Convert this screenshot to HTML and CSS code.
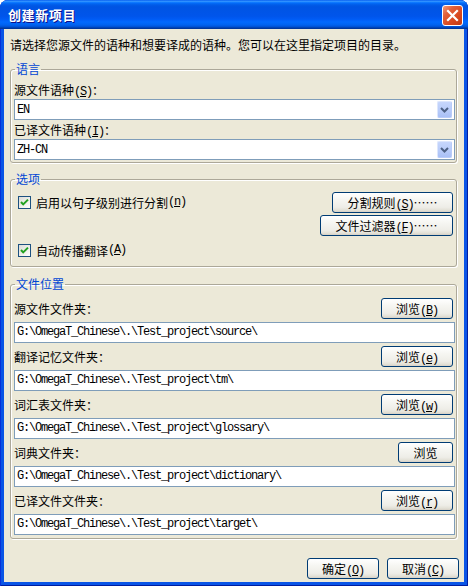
FILE: index.html
```html
<!DOCTYPE html>
<html lang="zh-CN">
<head>
<meta charset="utf-8">
<title>创建新项目</title>
<link rel="stylesheet" href="styles.css">
</head>
<body>
<div class="window">
  <div class="titlebar">
    <span class="title">创建新项目</span>
    <span class="close" aria-label="关闭"><svg width="19" height="19" viewBox="0 0 19 19"><path d="M5 5 L14 14 M14 5 L5 14" stroke="#fff" stroke-width="2.2" stroke-linecap="square"/></svg></span>
  </div>
  <div class="client">
    <p class="intro">请选择您源文件的语种和想要译成的语种。您可以在这里指定项目的目录。</p>

    <fieldset class="group group-lang">
      <legend>语言</legend>
      <div class="label">源文件语种<span class="k">(<u>S</u>)</span>：</div>
      <div class="combo"><span class="val">EN</span><span class="drop"><svg width="13" height="15" viewBox="0 0 13 15"><path d="M3 6 L6.5 9.5 L10 6" fill="none" stroke="#4D6185" stroke-width="2"/></svg></span></div>
      <div class="label">已译文件语种<span class="k">(<u>I</u>)</span>：</div>
      <div class="combo"><span class="val">ZH-CN</span><span class="drop"><svg width="13" height="15" viewBox="0 0 13 15"><path d="M3 6 L6.5 9.5 L10 6" fill="none" stroke="#4D6185" stroke-width="2"/></svg></span></div>
    </fieldset>

    <fieldset class="group group-opts">
      <legend>选项</legend>
      <div class="opt-row">
        <label class="check"><span class="box"><svg width="11" height="11" viewBox="0 0 11 11"><path d="M2 5 L4.2 7.4 L9 2.6" fill="none" stroke="#21A121" stroke-width="2"/></svg></span>启用以句子级别进行分割<span class="k">(<u>n</u>)</span></label>
        <button class="btn btn-rules">分割规则<span class="k">(<u>S</u>)</span>……</button>
      </div>
      <div class="opt-row opt-end">
        <button class="btn btn-filter">文件过滤器<span class="k">(<u>F</u>)</span>……</button>
      </div>
      <div class="opt-row opt-last">
        <label class="check"><span class="box"><svg width="11" height="11" viewBox="0 0 11 11"><path d="M2 5 L4.2 7.4 L9 2.6" fill="none" stroke="#21A121" stroke-width="2"/></svg></span>自动传播翻译<span class="k">(<u>A</u>)</span></label>
      </div>
    </fieldset>

    <fieldset class="group group-files">
      <legend>文件位置</legend>
      <div class="file">
        <div class="file-head"><span>源文件文件夹：</span><button class="btn browse">浏览<span class="k">(<u>B</u>)</span></button></div>
        <div class="path">G:\OmegaT_Chinese\.\Test_project\source\</div>
      </div>
      <div class="file">
        <div class="file-head"><span>翻译记忆文件夹：</span><button class="btn browse">浏览<span class="k">(<u>e</u>)</span></button></div>
        <div class="path">G:\OmegaT_Chinese\.\Test_project\tm\</div>
      </div>
      <div class="file">
        <div class="file-head"><span>词汇表文件夹：</span><button class="btn browse">浏览<span class="k">(<u>w</u>)</span></button></div>
        <div class="path">G:\OmegaT_Chinese\.\Test_project\glossary\</div>
      </div>
      <div class="file">
        <div class="file-head"><span>词典文件夹：</span><button class="btn browse browse-short">浏览</button></div>
        <div class="path">G:\OmegaT_Chinese\.\Test_project\dictionary\</div>
      </div>
      <div class="file">
        <div class="file-head"><span>已译文件文件夹：</span><button class="btn browse">浏览<span class="k">(<u>r</u>)</span></button></div>
        <div class="path">G:\OmegaT_Chinese\.\Test_project\target\</div>
      </div>
    </fieldset>

    <div class="actions">
      <button class="btn act">确定<span class="k">(<u>O</u>)</span></button>
      <button class="btn act">取消<span class="k">(<u>C</u>)</span></button>
    </div>
  </div>
</div>
</body>
</html>
```

FILE: styles.css
```css
* { box-sizing: border-box; }
html, body { margin: 0; padding: 0; }
body {
  width: 468px;
  height: 586px;
  overflow: hidden;
  background: #ffffff;
  font-family: "Noto Sans CJK SC", "Noto Sans", sans-serif;
  font-size: 12px;
  color: #000;
}

.window {
  width: 468px;
  height: 586px;
  display: flex;
  flex-direction: column;
  background: #0A55E6;
  border-radius: 8px 8px 0 0;
  box-shadow: inset 1px 0 #0831D9, inset -1px 0 #001EA0, inset 0 -1px #001EA0;
}

.titlebar {
  height: 29px;
  flex: none;
  display: flex;
  align-items: center;
  justify-content: space-between;
  padding: 0 5px 0 8px;
  border-radius: 8px 8px 0 0;
  background: linear-gradient(to bottom,
    #0058EE 0%, #3593FF 4%, #288EFF 6%, #127DFF 8%, #036FFC 10%,
    #0262EE 14%, #0057E5 20%, #0054E3 24%, #0055EB 56%, #005BF5 66%,
    #026AFE 76%, #0062EF 86%, #0052D6 92%, #0040AB 96%, #003092 100%);
}

.title {
  color: #fff;
  font-weight: bold;
  font-size: 13px;
  letter-spacing: 0.6px;
  line-height: 29px;
  text-shadow: 1px 1px 0 #0F1089;
}

.close {
  width: 21px;
  height: 21px;
  margin-top: 2px;
  display: flex;
  align-items: center;
  justify-content: center;
  border: 1px solid #fff;
  border-radius: 3px;
  background: linear-gradient(135deg, #F29A78 0%, #E2603A 30%, #D9481F 65%, #C13A14 100%);
}

.client {
  flex: 1;
  margin: 0 4px 4px;
  background: #ECE9D8;
  display: flex;
  flex-direction: column;
}

.intro {
  margin: 0;
  padding: 6px 0 0 6px;
  line-height: 20px;
  white-space: nowrap;
}

.group {
  margin: 9px 7px 0 6px;
  padding: 4px 1px 2px 3px;
  min-width: 0;
  border: 1px solid #ACA899;
  border-radius: 3px;
  box-shadow: 1px 1px 0 #fff, inset 1px 1px 0 #fff;
}
.group legend {
  padding: 0 1px;
  margin-left: 1px;
  line-height: 14px;
  height: 14px;
  color: #0046D5;
}
.group-lang { margin-top: 7px; }
.group-opts { padding-top: 6px; padding-bottom: 6px; }
.group-files { margin-top: 10px; padding-top: 7px; padding-bottom: 3px; }

.label {
  height: 19px;
  line-height: 19px;
  white-space: nowrap;
}

.k {
  font-family: "Liberation Mono", monospace;
  font-size: 12px;
  letter-spacing: -1.2px;
}

.combo {
  height: 21px;
  display: flex;
  align-items: center;
  justify-content: space-between;
  border: 1px solid #7F9DB9;
  background: #fff;
  padding: 1px 2px 1px 2px;
}
.val, .path {
  font-family: "Liberation Mono", monospace;
  font-size: 12px;
  letter-spacing: -1.2px;
  white-space: nowrap;
}
.drop {
  width: 15px;
  height: 17px;
  display: flex;
  align-items: center;
  justify-content: center;
  border: 1px solid #B9CCF9;
  border-top-color: #DCE6FD;
  border-left-color: #DCE6FD;
  border-radius: 2px;
  background: linear-gradient(to bottom, #C6D6FC 0%, #B7CBF9 60%, #A9C0F6 100%);
}

.opt-row {
  height: 21px;
  display: flex;
  align-items: center;
  justify-content: space-between;
}
.opt-end { margin-top: 2px; justify-content: flex-end; }
.opt-last { margin-top: 5px; height: 19px; }

.check {
  display: flex;
  align-items: center;
  margin-left: 4px;
  line-height: 19px;
  white-space: nowrap;
}
.box {
  width: 13px;
  height: 13px;
  margin-right: 5px;
  display: flex;
  align-items: center;
  justify-content: center;
  border: 1px solid #1C5180;
  background: linear-gradient(135deg, #DCDCD7 0%, #F4F4F0 70%, #FFFFFF 100%);
}

.btn {
  height: 21px;
  padding: 0;
  margin: 0;
  font-family: "Noto Sans CJK SC", "Noto Sans", sans-serif;
  font-size: 12px;
  line-height: 19px;
  color: #000;
  text-align: center;
  white-space: nowrap;
  border: 1px solid #003C74;
  border-radius: 3px;
  background: linear-gradient(to bottom, #FFFFFF 0%, #F6F6F2 35%, #EEEDE7 75%, #E3E1D7 90%, #D6D0C5 100%);
}
.btn-rules { width: 121px; margin-right: 2px; }
.btn-filter { width: 133px; margin-right: 2px; }

.file + .file { margin-top: 3px; }
.file-head {
  height: 21px;
  display: flex;
  align-items: center;
  justify-content: space-between;
  white-space: nowrap;
}
.browse { width: 72px; margin-right: 2px; }
.browse-short { width: 55px; }

.path {
  margin-top: 3px;
  height: 21px;
  line-height: 19px;
  padding-left: 2px;
  border: 1px solid #7F9DB9;
  background: #fff;
}

.actions {
  margin-top: 19px;
  display: flex;
  justify-content: flex-end;
  gap: 8px;
  padding-right: 5px;
}
.act { width: 72px; }
```
